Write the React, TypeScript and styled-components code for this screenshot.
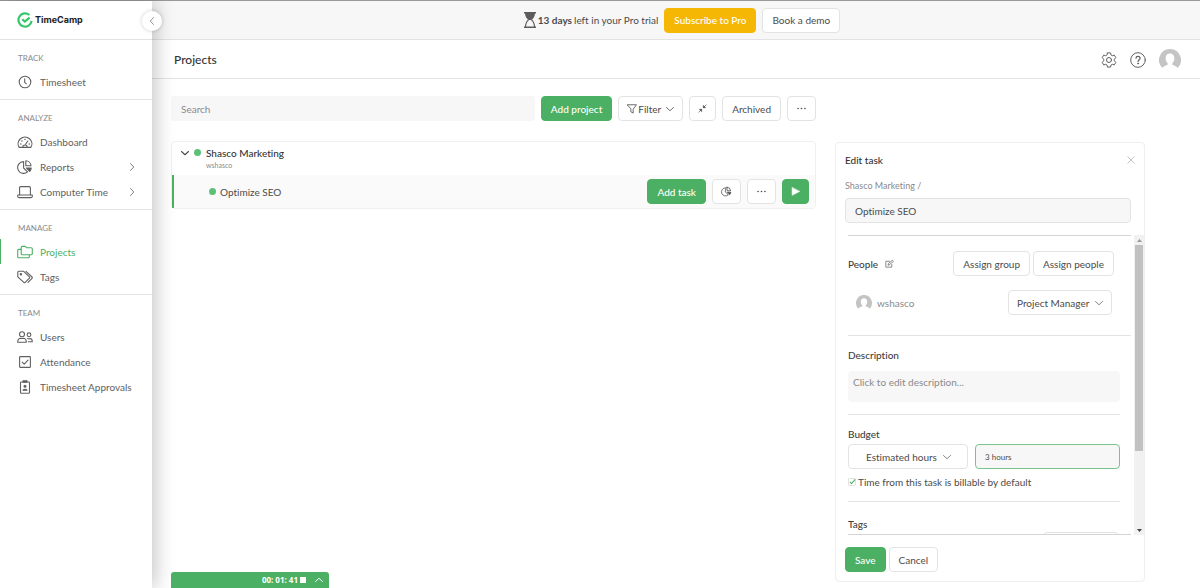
import React from "react";
import styled, { createGlobalStyle, css } from "styled-components";

const color = {
  green: "#4bb063",
  dot: "#5cc078",
  amber: "#f6b704",
  text: "#4b4b4b",
  soft: "#606060",
  muted: "#8a8a8a",
  line: "#e3e3e3",
  field: "#f7f7f7",
};

const GlobalStyle = createGlobalStyle`
  *, *::before, *::after { box-sizing: border-box; }
  body {
    margin: 0;
    background: #fff;
    color: ${color.text};
    font: 400 10px/16px Lato, "Open Sans", sans-serif;
    font-variant-ligatures: none;
  }
  button, input, select, textarea {
    font: inherit;
    font-variant-ligatures: none;
    color: inherit;
    margin: 0;
  }
  button { cursor: pointer; }
  h1, h2, h3, p, ul { margin: 0; padding: 0; font: inherit; font-variant-ligatures: none; }
  ul { list-style: none; }
  svg { display: block; flex: none; }
`;

/* ---------- icons ---------- */

type IconProps = { size?: number; children: React.ReactNode; stroke?: number };

const Icon = ({ size = 16, children, stroke = 1.1 }: IconProps) => (
  <svg
    width={size}
    height={size}
    viewBox="0 0 16 16"
    fill="none"
    stroke="currentColor"
    strokeWidth={stroke}
    strokeLinecap="round"
    strokeLinejoin="round"
    aria-hidden="true"
  >
    {children}
  </svg>
);

const ClockIcon = () => (
  <Icon>
    <circle cx="8" cy="8" r="5.8" />
    <path d="M7.7 4.8v3.6l1.6 1.4" />
  </Icon>
);
const DashboardIcon = () => (
  <Icon>
    <path d="M2.2 13.4a6.900 6.700 0 1 1 11.600 0z" />
    <path d="M8.600 10.200l2.200-3.200" />
    <path d="M5.800 13.200c0-3 4.400-3 4.400 0" />
    <path d="M3.800 10h.1M4.900 7h.1M8 5.400h.1M12.200 10h.1" strokeWidth="1.400" />
  </Icon>
);
const PieIcon = ({ size = 16 }: { size?: number }) => (
  <Icon size={size}>
    <path d="M6.600 2.600a5.900 5.900 0 1 0 3.900 10.300L6.600 9z" />
    <path d="M8.800 1.800v5h5.200a5.300 5.300 0 0 0-5.200-5z" />
    <path d="M9.400 9h4.800c0 1.400-.6 2.600-1.600 3.500z" fill="currentColor" />
  </Icon>
);
const LaptopIcon = () => (
  <Icon>
    <path d="M2.600 10.800V3.600c0-.6.4-1 1-1h8.800c.6 0 1 .4 1 1v7.200" />
    <path d="M.7 11h14.600v1.200c0 .8-.6 1.400-1.400 1.400H2.100c-.8 0-1.400-.6-1.400-1.400z" />
  </Icon>
);
const FoldersIcon = () => (
  <Icon>
    <path d="M4.200 3.400c0-.6.4-1 1-1h3l1.400 1.400h4.700c.6 0 1 .4 1 1v5c0 .6-.4 1-1 1H5.200c-.6 0-1-.4-1-1z" />
    <path d="M4 5.400H1.700c-.6 0-1 .4-1 1v6.400c0 .6.4 1 1 1h9.600c.6 0 1-.4 1-1v-1.800" />
  </Icon>
);
const TagsIcon = () => (
  <Icon>
    <path d="M.8 3.200c0-.6.4-1 1-1h4.600l6 5.600c.4.400.4 1 0 1.400l-4.200 4.200c-.4.400-1 .4-1.400 0L.8 7.800z" />
    <path d="M9 2.400l6 5.600c.4.400.4 1 0 1.400l-4 4" />
    <circle cx="3.900" cy="5.200" r=".7" />
  </Icon>
);
const UsersIcon = () => (
  <Icon>
    <circle cx="5" cy="5.200" r="2.500" />
    <path d="M.7 13.200c0-2.600 1.400-4 3-4 .8.400 1.800.4 2.600 0 1.600 0 3 1.400 3 4z" />
    <circle cx="12" cy="5.800" r="1.900" />
    <path d="M10.600 9.600c.8.300 1.800.3 2.600-.1 1.200.1 2.100 1.200 2.100 3.300h-4" />
  </Icon>
);
const CheckSquareIcon = () => (
  <Icon>
    <rect x="2.600" y="2.600" width="10.800" height="10.800" rx=".6" />
    <path d="M5.200 8.200l2 2 3.800-4" />
  </Icon>
);
const BadgeIcon = () => (
  <Icon>
    <rect x="3.500" y="3" width="9" height="11.200" rx=".8" />
    <path d="M6 3.200V1.800h4v1.400z" fill="currentColor" />
    <circle cx="8" cy="7.300" r="1" fill="currentColor" />
    <path d="M6 11.300c0-1.500 4-1.500 4 0z" fill="currentColor" />
  </Icon>
);
const Chevron = ({ dir = "down", size = 8, stroke = 1.6 }: { dir?: "down" | "up" | "left" | "right"; size?: number; stroke?: number }) => {
  const d = {
    down: "M1 5l7 6.500L15 5",
    up: "M1 11l7-6.500 7 6.500",
    left: "M11 1L4.500 8l6.500 7",
    right: "M5 1l6.500 7L5 15",
  }[dir];
  return (
    <Icon size={size} stroke={stroke}>
      <path d={d} />
    </Icon>
  );
};
const DotsIcon = () => (
  <Icon size={11}>
    <g fill="currentColor" stroke="none">
      <circle cx="3" cy="8" r="1.200" />
      <circle cx="8" cy="8" r="1.200" />
      <circle cx="13" cy="8" r="1.200" />
    </g>
  </Icon>
);
const FunnelIcon = () => (
  <Icon size={10} stroke={1.3}>
    <path d="M.8 1.200h14.400L9.800 8.300v6.200l-3.600-2V8.300z" />
  </Icon>
);
const CollapseIcon = () => (
  <Icon size={9} stroke={1.2}>
    <path d="M14.500 1.500L9.500 6.500M1.500 14.500l5-5" />
    <path d="M9.500 3.200v3.300h3.300zM6.500 12.800V9.500H3.200z" fill="currentColor" />
  </Icon>
);
const PlayIcon = () => (
  <Icon size={9}>
    <path d="M2 1.200v13.600L15 8z" fill="currentColor" />
  </Icon>
);
const GearIcon = () => (
  <Icon size={16} stroke={1}>
    <circle cx="8" cy="8" r="2.500" />
    <path d="M6.500.9h3l.5 2 1.300.8 2-.6 1.500 2.600-1.500 1.500v1.600l1.500 1.500-1.500 2.600-2-.6-1.300.8-.5 2h-3l-.5-2-1.300-.8-2 .6-1.500-2.600 1.500-1.500V7.200L1.200 5.700l1.500-2.600 2 .6L6 2.900z" />
  </Icon>
);
const HelpIcon = () => (
  <Icon size={16} stroke={1}>
    <circle cx="8" cy="8" r="7.300" />
    <path d="M6 6.200c.1-2.600 4.100-2.500 4.100 0 0 1.500-2 1.600-2 3.200" strokeWidth="1.200" />
    <circle cx="8.100" cy="11.500" r=".5" fill="currentColor" />
  </Icon>
);
const Avatar = ({ size }: { size: number }) => (
  <svg width={size} height={size} viewBox="0 0 22 22" role="img" aria-label="Avatar">
    <path
      fill="#c4c4c4"
      d="M11 0a11 11 0 0 0-7.600 18.900c.8-1.500 2.600-2.500 4.900-3 .5-.2.600-1.300.2-1.900-1.300-1.300-1.900-2.900-1.900-4.800C6.600 6 8.400 4.400 11 4.400s4.400 1.600 4.400 4.800c0 1.900-.6 3.500-1.900 4.800-.4.600-.3 1.700.2 1.900 2.300.5 4.100 1.500 4.900 3A11 11 0 0 0 11 0z"
    />
  </svg>
);
const HourglassIcon = () => (
  <svg width="12" height="16" viewBox="0 0 12 16" fill="none" stroke="#5c5c5c" aria-hidden="true">
    <path d="M0 .7h12M0 15.300h12" strokeWidth="1.400" />
    <path d="M1 1h10c0 3.500-1.500 5.500-3.500 7h-3C2.500 6.500 1 4.500 1 1z" fill="#5c5c5c" stroke="none" />
    <path d="M4.600 7.700C2.600 9.300 1.600 11.500 1.500 15M7.400 7.700c2 1.600 3 3.800 3.100 7.300" strokeWidth="1.100" />
  </svg>
);
const EditIcon = () => (
  <Icon size={9} stroke={1.3}>
    <path d="M8 4H1.500v10.500H12V9.500" />
    <path d="M5.500 10.500l.6-2.600L13 2.200l2 2-7 5.700z" />
  </Icon>
);
const LogoMark = () => (
  <svg width="16" height="16" viewBox="0 0 16 16" fill="none" stroke="#35c66b" aria-hidden="true">
    <path d="M12.400 3A6.600 6.600 0 1 0 14.600 8.800" strokeWidth="2.200" />
    <path d="M5.200 7.200l2.600 2.400L12.600 5.600" strokeWidth="2.200" />
  </svg>
);

/* ---------- shared controls ---------- */

const Button = styled.button<{ $tone?: "plain" | "green" | "amber"; $pad?: number }>`
  display: inline-flex;
  align-items: center;
  justify-content: center;
  gap: 5px;
  flex: none;
  height: 25px;
  padding: 0 ${({ $pad = 9 }) => $pad}px;
  border: 1px solid ${color.line};
  border-radius: 4px;
  background: #fff;
  color: ${color.text};
  white-space: nowrap;
  ${({ $tone }) =>
    $tone === "green" &&
    css`
      border-color: ${color.green};
      background: ${color.green};
      color: #fff;
      font-weight: 500;
    `}
  ${({ $tone }) =>
    $tone === "amber" &&
    css`
      border-color: ${color.amber};
      background: ${color.amber};
      color: #fff;
      font-weight: 500;
    `}
`;

const IconButton = styled.button`
  display: inline-flex;
  padding: 0;
  border: 0;
  background: none;
  color: ${color.soft};
`;

const Dot = styled.span`
  width: 7px;
  height: 7px;
  border-radius: 50%;
  background: ${color.dot};
`;

/* ---------- shell ---------- */

const Shell = styled.div`
  display: grid;
  grid-template-columns: 152px minmax(0, 1fr);
  min-height: 100vh;
  border-top: 1px solid #999;
`;

const Sidebar = styled.aside`
  position: relative;
  z-index: 2;
  background: #fff;
  box-shadow: 4px 0 18px rgba(0, 0, 0, 0.22);
`;

const Brand = styled.a`
  display: flex;
  align-items: center;
  gap: 2px;
  height: 39px;
  padding-left: 17px;
  border-bottom: 1px solid ${color.line};
  color: #222;
  font-family: Inter, sans-serif;
  font-size: 9px;
  font-weight: 700;
  text-decoration: none;
`;

const CollapseToggle = styled.button`
  position: absolute;
  top: 10px;
  right: -10px;
  display: grid;
  place-items: center;
  width: 20px;
  height: 20px;
  padding: 0;
  border: 0;
  border-radius: 50%;
  background: #fff;
  box-shadow: 0 0 4px rgba(0, 0, 0, 0.2);
  color: #777;
`;

const NavSection = styled.section`
  padding: 10px 0 5px;
  border-bottom: 1px solid ${color.line};
  &:last-of-type {
    border-bottom: 0;
  }
`;

const NavHeading = styled.h2`
  height: 19px;
  padding-left: 18px;
  color: ${color.muted};
  font-size: 8px;
`;

const NavLink = styled.a<{ $active?: boolean }>`
  display: flex;
  align-items: center;
  gap: 7px;
  height: 25px;
  padding: 0 16px 0 17px;
  color: ${({ $active }) => ($active ? color.green : color.soft)};
  box-shadow: ${({ $active }) => ($active ? `inset 1px 0 ${color.green}` : "none")};
  text-decoration: none;
  white-space: nowrap;
  span {
    flex: 1;
  }
`;

const Main = styled.main`
  display: flex;
  flex-direction: column;
  min-width: 0;
`;

const TrialBar = styled.div`
  display: flex;
  align-items: center;
  justify-content: center;
  gap: 6px;
  height: 39px;
  padding-left: 12px;
  border-bottom: 1px solid ${color.line};
  background: #f7f7f7;
`;

const TrialText = styled.p`
  display: flex;
  align-items: center;
  gap: 2px;
`;

const PageHeader = styled.header`
  display: flex;
  align-items: center;
  justify-content: space-between;
  height: 39px;
  padding: 1px 19px 0 22px;
  border-bottom: 1px solid ${color.line};
  h1 {
    color: #333;
    font-size: 12px;
    font-weight: 500;
  }
`;

const HeaderActions = styled.div`
  display: flex;
  align-items: center;
  gap: 13px;
`;

const Content = styled.div`
  display: grid;
  grid-template-columns: minmax(0, 1fr) 310px;
  gap: 19px;
  padding: 17px 55px 5px 19px;
`;

const Toolbar = styled.div`
  display: flex;
  gap: 6px;
`;

const SearchField = styled.input`
  flex: 1;
  min-width: 0;
  height: 25px;
  padding: 0 10px;
  border: 0;
  border-radius: 3px;
  background: ${color.field};
  &::placeholder {
    color: ${color.muted};
  }
`;

const ProjectList = styled.ul`
  margin-top: 20px;
  border: 1px solid #f0f0f0;
  border-radius: 4px;
`;

const ProjectRow = styled.li`
  display: flex;
  align-items: flex-start;
  gap: 5px;
  height: 33px;
  padding: 3px 9px;
  > * {
    margin-top: 4px;
  }
`;

const ProjectName = styled.div`
  margin-top: 0;
  color: #333;
  font-weight: 500;
  small {
    display: block;
    color: ${color.muted};
    font-size: 7px;
    font-weight: 400;
    line-height: 8px;
  }
`;

const TaskRow = styled.li`
  display: flex;
  align-items: center;
  gap: 6px;
  height: 33px;
  padding: 0 6px 0 35px;
  border-left: 2px solid ${color.green};
  background: #fafafa;
  color: ${color.text};
`;

const TaskName = styled.div`
  display: flex;
  flex: 1;
  align-items: center;
  gap: 4px;
`;

/* ---------- edit panel ---------- */

const Panel = styled.form`
  display: flex;
  flex-direction: column;
  margin-top: 46px;
  border: 1px solid #eee;
  border-radius: 4px;
`;

const PanelHead = styled.div`
  padding: 9px 13px 12px 9px;
`;

const PanelTitle = styled.div`
  display: flex;
  align-items: center;
  justify-content: space-between;
  margin-right: -4px;
  h2 {
    color: #333;
    font-weight: 500;
  }
  button {
    color: #bbb;
  }
`;

const Crumb = styled.p`
  padding: 10px 0 4px;
  color: ${color.muted};
  font-size: 9px;
`;

const TextField = styled.input<{ $focus?: boolean; $small?: boolean }>`
  width: 100%;
  min-width: 0;
  height: 25px;
  padding: 0 9px;
  border: 1px solid ${({ $focus }) => ($focus ? "#7ac48c" : color.line)};
  border-radius: 4px;
  background: ${color.field};
  font-size: ${({ $small }) => ($small ? 8 : 10)}px;
`;

const ScrollArea = styled.div`
  display: flex;
  gap: 3px;
  height: 300px;
  padding-left: 12px;
`;

const ScrollBody = styled.div`
  flex: 1;
  min-width: 0;
  overflow: hidden;
  border: solid #d5d5d5;
  border-width: 1px 0;
`;

const ScrollTrack = styled.div`
  display: flex;
  flex-direction: column;
  align-items: center;
  width: 10px;
  background: #f1f1f1;
`;

const ScrollThumb = styled.div`
  width: 8px;
  height: 206px;
  background: #c1c1c1;
`;

const ScrollArrow = styled.span<{ $down?: boolean }>`
  display: grid;
  place-items: center;
  height: 10px;
  margin-top: ${({ $down }) => ($down ? "auto" : 0)};
  color: ${({ $down }) => ($down ? "#444" : "#999")};
`;

const Group = styled.section<{ $wide?: boolean }>`
  margin-right: ${({ $wide }) => ($wide ? 0 : 11)}px;
  padding: 11px 0;
  border-bottom: 1px solid ${color.line};
  &:last-child {
    padding-top: 14px;
    border-bottom: 0;
  }
`;

const GroupTitle = styled.h3`
  display: flex;
  align-items: center;
  gap: 7px;
  font-weight: 500;
  color: #404040;
`;

const PeopleRow = styled.div`
  display: flex;
  align-items: center;
  justify-content: space-between;
  margin: 4px 17px 14px 0;
`;

const MemberRow = styled(PeopleRow)`
  margin: 0 19px 9px 8px;
  color: ${color.muted};
`;

const Inline = styled.div<{ $gap?: number }>`
  display: flex;
  align-items: center;
  gap: ${({ $gap = 3 }) => $gap}px;
`;

const BudgetRow = styled.div`
  display: flex;
  gap: 7px;
  margin-top: 2px;
`;

const SelectBox = styled.label<{ $width: number }>`
  position: relative;
  flex: none;
  width: ${({ $width }) => $width}px;
  svg {
    position: absolute;
    top: 9px;
    right: 9px;
    pointer-events: none;
    color: #666;
  }
`;

const Select = styled.select<{ $left?: number }>`
  appearance: none;
  display: block;
  width: 100%;
  height: 25px;
  padding: 0 0 0 ${({ $left = 8 }) => $left}px;
  border: 1px solid ${color.line};
  border-radius: 4px;
  background: #fff;
  color: ${color.text};
`;

const WideSelect = styled(SelectBox)`
  svg {
    right: 17px;
  }
`;

const DescriptionField = styled.textarea`
  display: block;
  width: 100%;
  height: 31px;
  margin: 8px 0 1px;
  padding: 3px 5px;
  border: 0;
  border-radius: 4px;
  background: ${color.field};
  resize: none;
  &::placeholder {
    color: ${color.muted};
  }
`;

const CheckLabel = styled.label`
  display: flex;
  align-items: center;
  gap: 2px;
  margin-top: 5px;
`;

const Checkbox = styled.input`
  appearance: none;
  position: relative;
  width: 8px;
  height: 8px;
  border: 1px solid ${color.line};
  border-radius: 1px;
  &:checked::after {
    content: "";
    position: absolute;
    top: -1px;
    left: 2px;
    width: 3px;
    height: 6px;
    border: solid ${color.green};
    border-width: 0 1px 1px 0;
    transform: rotate(42deg);
  }
`;

const TagsSelect = styled.select`
  display: block;
  width: 76px;
  height: 25px;
  margin: 0 1px 0 auto;
  border: 1px solid ${color.line};
  border-radius: 4px;
  background: #fff;
`;

const PanelFoot = styled.div`
  display: flex;
  gap: 3px;
  padding: 12px 9px 9px;
`;

const Timer = styled.div`
  position: fixed;
  bottom: 0;
  left: 171px;
  z-index: 3;
  display: flex;
  align-items: center;
  justify-content: flex-end;
  gap: 2px;
  width: 158px;
  height: 16px;
  padding-right: 6px;
  border-radius: 3px 3px 0 0;
  background: ${color.green};
  color: #fff;
  font: 700 8px/16px "Noto Sans", sans-serif;
  button {
    color: #fff;
  }
`;

const StopButton = styled(IconButton)`
  width: 6px;
  height: 6px;
  margin-right: 7px;
  background: #fff;
`;

/* ---------- data ---------- */

type NavItem = { label: string; icon: React.ReactNode; more?: boolean; active?: boolean };

const nav: { title: string; items: NavItem[] }[] = [
  { title: "TRACK", items: [{ label: "Timesheet", icon: <ClockIcon /> }] },
  {
    title: "ANALYZE",
    items: [
      { label: "Dashboard", icon: <DashboardIcon /> },
      { label: "Reports", icon: <PieIcon />, more: true },
      { label: "Computer Time", icon: <LaptopIcon />, more: true },
    ],
  },
  {
    title: "MANAGE",
    items: [
      { label: "Projects", icon: <FoldersIcon />, active: true },
      { label: "Tags", icon: <TagsIcon /> },
    ],
  },
  {
    title: "TEAM",
    items: [
      { label: "Users", icon: <UsersIcon /> },
      { label: "Attendance", icon: <CheckSquareIcon /> },
      { label: "Timesheet Approvals", icon: <BadgeIcon /> },
    ],
  },
];

const EditTask = () => (
  <Panel onSubmit={(e) => e.preventDefault()}>
    <PanelHead>
      <PanelTitle>
        <h2>Edit task</h2>
        <IconButton type="button" aria-label="Close">
          <Icon size={8} stroke={1.8}>
            <path d="M1.500 1.500l13 13M14.500 1.500l-13 13" />
          </Icon>
        </IconButton>
      </PanelTitle>
      <Crumb>Shasco Marketing /</Crumb>
      <TextField aria-label="Task name" defaultValue="Optimize SEO" />
    </PanelHead>
    <ScrollArea>
      <ScrollBody>
        <Group $wide>
          <PeopleRow>
            <GroupTitle>
              People
              <IconButton type="button" aria-label="Edit people">
                <EditIcon />
              </IconButton>
            </GroupTitle>
            <Inline>
              <Button type="button">Assign group</Button>
              <Button type="button">Assign people</Button>
            </Inline>
          </PeopleRow>
          <MemberRow>
            <Inline $gap={5}>
              <Avatar size={16} />
              wshasco
            </Inline>
            <SelectBox $width={104}>
              <Select aria-label="Role" defaultValue="pm">
                <option value="pm">Project Manager</option>
                <option value="user">User</option>
              </Select>
              <Chevron />
            </SelectBox>
          </MemberRow>
        </Group>
        <Group>
          <GroupTitle>Description</GroupTitle>
          <DescriptionField aria-label="Description" placeholder="Click to edit description..." />
        </Group>
        <Group>
          <GroupTitle>Budget</GroupTitle>
          <BudgetRow>
            <WideSelect $width={120}>
              <Select $left={17} aria-label="Budget type" defaultValue="hours">
                <option value="hours">Estimated hours</option>
                <option value="fee">Budget</option>
              </Select>
              <Chevron />
            </WideSelect>
            <TextField $focus $small aria-label="Budget value" defaultValue="3 hours" />
          </BudgetRow>
          <CheckLabel>
            <Checkbox type="checkbox" defaultChecked />
            Time from this task is billable by default
          </CheckLabel>
        </Group>
        <Group>
          <GroupTitle>Tags</GroupTitle>
          <TagsSelect aria-label="Tags" />
        </Group>
      </ScrollBody>
      <ScrollTrack aria-hidden="true">
        <ScrollArrow>
          <svg width="5" height="3" viewBox="0 0 5 3">
            <path d="M0 3l2.500-3L5 3z" fill="currentColor" />
          </svg>
        </ScrollArrow>
        <ScrollThumb />
        <ScrollArrow $down>
          <svg width="5" height="3" viewBox="0 0 5 3">
            <path d="M0 0l2.500 3L5 0z" fill="currentColor" />
          </svg>
        </ScrollArrow>
      </ScrollTrack>
    </ScrollArea>
    <PanelFoot>
      <Button $tone="green" type="submit">
        Save
      </Button>
      <Button type="button">Cancel</Button>
    </PanelFoot>
  </Panel>
);

export default function App() {
  return (
    <>
      <GlobalStyle />
      <Shell>
        <Sidebar>
          <Brand href="#home">
            <LogoMark />
            TimeCamp
          </Brand>
          <CollapseToggle type="button" aria-label="Collapse menu">
            <Chevron dir="left" />
          </CollapseToggle>
          <nav>
            {nav.map((section) => (
              <NavSection key={section.title}>
                <NavHeading>{section.title}</NavHeading>
                {section.items.map((item) => (
                  <NavLink key={item.label} href={`#${item.label}`} $active={item.active}>
                    {item.icon}
                    <span>{item.label}</span>
                    {item.more && <Chevron dir="right" />}
                  </NavLink>
                ))}
              </NavSection>
            ))}
          </nav>
        </Sidebar>
        <Main>
          <TrialBar>
            <TrialText>
              <HourglassIcon />
              <strong>13 days</strong> left in your Pro trial
            </TrialText>
            <Button type="button" $tone="amber">
              Subscribe to Pro
            </Button>
            <Button type="button">Book a demo</Button>
          </TrialBar>
          <PageHeader>
            <h1>Projects</h1>
            <HeaderActions>
              <IconButton type="button" aria-label="Settings">
                <GearIcon />
              </IconButton>
              <IconButton type="button" aria-label="Help">
                <HelpIcon />
              </IconButton>
              <IconButton type="button" aria-label="Account">
                <Avatar size={22} />
              </IconButton>
            </HeaderActions>
          </PageHeader>
          <Content>
            <div>
              <Toolbar>
                <SearchField type="search" aria-label="Search projects" placeholder="Search" />
                <Button type="button" $tone="green">
                  Add project
                </Button>
                <Button type="button" $pad={8}>
                  <Inline $gap={1}>
                    <FunnelIcon />
                    Filter
                  </Inline>
                  <Chevron />
                </Button>
                <Button type="button" $pad={8} aria-label="Collapse all">
                  <CollapseIcon />
                </Button>
                <Button type="button">Archived</Button>
                <Button type="button" $pad={8} aria-label="More">
                  <DotsIcon />
                </Button>
              </Toolbar>
              <ProjectList>
                <ProjectRow>
                  <Chevron stroke={2.2} />
                  <Dot />
                  <ProjectName>
                    Shasco Marketing
                    <small>wshasco</small>
                  </ProjectName>
                </ProjectRow>
                <TaskRow>
                  <TaskName>
                    <Dot />
                    Optimize SEO
                  </TaskName>
                  <Button type="button" $tone="green">
                    Add task
                  </Button>
                  <Button type="button" $pad={8} aria-label="Report">
                    <PieIcon size={11} />
                  </Button>
                  <Button type="button" $pad={8} aria-label="Task menu">
                    <DotsIcon />
                  </Button>
                  <Button type="button" $tone="green" $pad={8} aria-label="Start timer">
                    <PlayIcon />
                  </Button>
                </TaskRow>
              </ProjectList>
            </div>
            <EditTask />
          </Content>
        </Main>
      </Shell>
      <Timer>
        <span>00: 01: 41</span>
        <StopButton type="button" aria-label="Stop timer" />
        <IconButton type="button" aria-label="Expand timer">
          <Chevron dir="up" stroke={2} />
        </IconButton>
      </Timer>
    </>
  );
}
